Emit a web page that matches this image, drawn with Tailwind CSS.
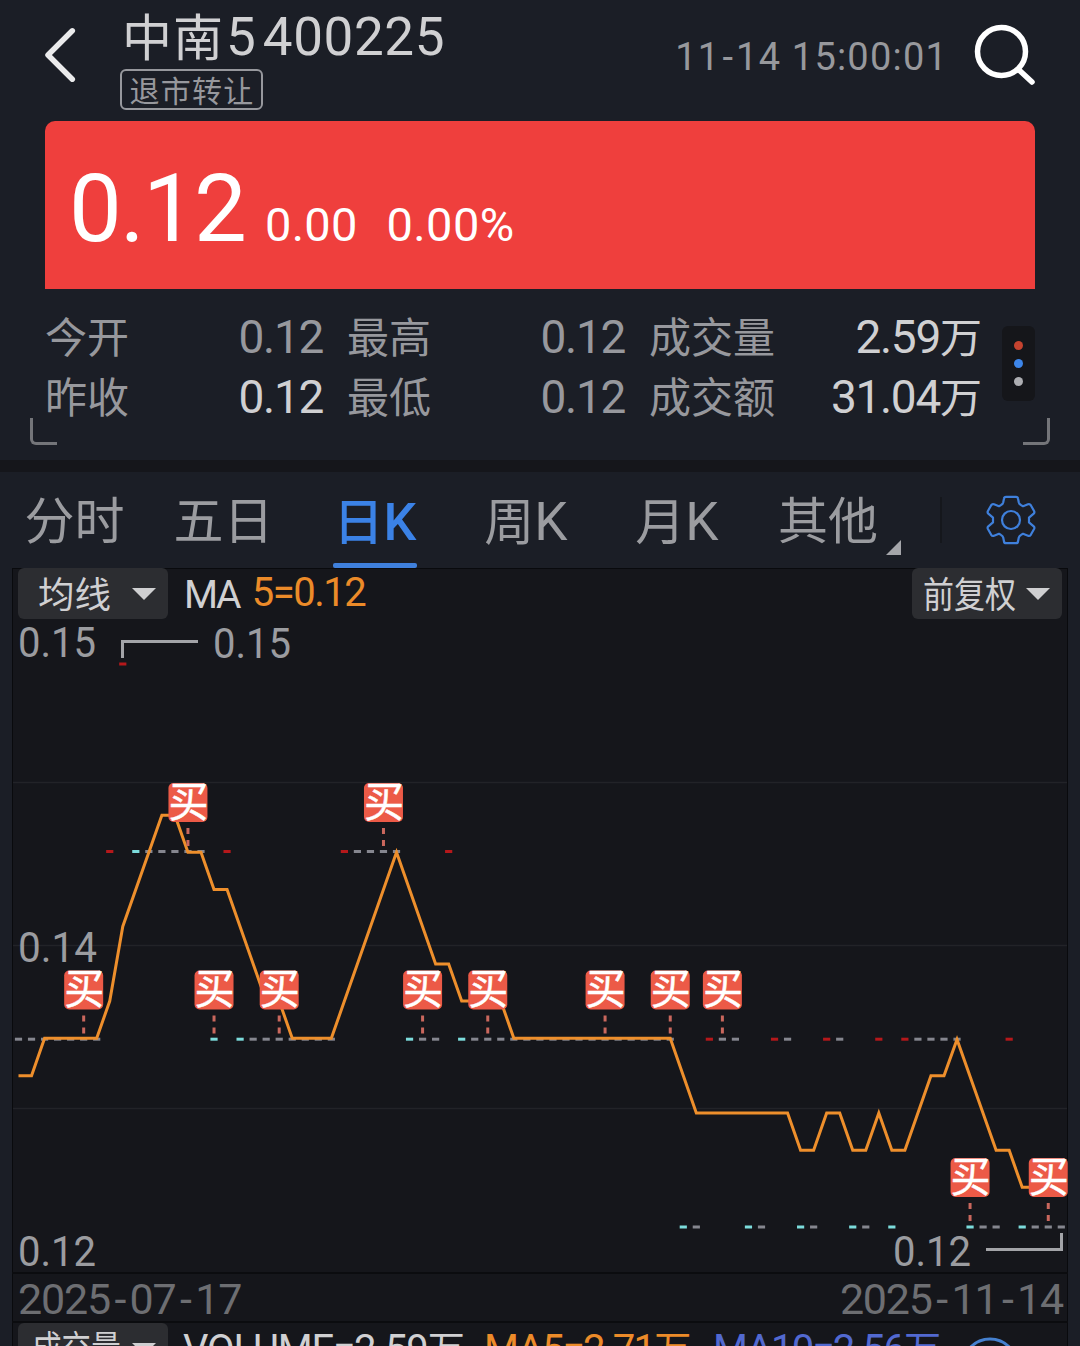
<!DOCTYPE html>
<html lang="zh-CN">

<head>
    <meta charset="UTF-8">
    <meta name="viewport" content="width=device-width, initial-scale=1.0">
    <title>中南5 400225</title>
    <script src="https://cdn.jsdelivr.net/npm/@tailwindcss/browser@4"></script>
</head>

<body class="bg-[#1b1e26] font-['Roboto','Noto_Sans_CJK_SC',sans-serif] text-[#d0d0d2]">
    <div class="w-[1080px] h-[1346px] overflow-hidden flex flex-col">

        <!-- Header -->
        <header class="h-[121px] shrink-0 flex pl-[42px] pr-[42px]">
            <svg class="w-9 h-[60px] mt-[25px]" viewBox="42 25 36 60" fill="none" stroke="#ebebec" stroke-width="5.5" stroke-linecap="round" stroke-linejoin="round">
                <path d="M72.3 30.8L48 55L72.3 79.2" />
            </svg>
            <div class="ml-[42px] flex flex-col items-start">
                <h1 class="mt-[6px] h-[63px] flex items-center text-[53px] leading-none whitespace-nowrap">
                    <span class="text-[50px] tracking-[1px] ml-[2px] pt-[2px]">中南</span><span class="ml-[2px]">5</span><span class="ml-[7px] tracking-[0.6px]">400225</span>
                </h1>
                <span class="w-[143px] h-[41px] flex items-center justify-center border-2 border-[#97989d] rounded-[6px] text-[30px] leading-none tracking-[1.3px] pl-[1px] pt-[4px] text-[#97989d]">退市转让</span>
            </div>
            <span class="ml-auto mt-[37px] text-[38px] leading-[40px] tracking-[1.2px] text-[#97989c] whitespace-nowrap">11<span class="mx-[2px]">-</span>14 15:00:01</span>
            <svg class="w-[66px] h-[66px] mt-[22px] ml-[24px]" viewBox="972 22 66 66" fill="none" stroke="#ffffff" stroke-width="5.5" stroke-linecap="round">
                <circle cx="1001.5" cy="51.5" r="24" />
                <path d="M1018.5 69.5L1032 82" />
            </svg>
        </header>

        <!-- Price -->
        <section class="mx-[45px] h-[168px] shrink-0 rounded-t-[10px] bg-[#ef3f3d] text-white flex items-baseline pl-[24px] pt-[33px]">
            <span class="text-[94px] leading-[110px] tracking-[-1.8px]">0.12</span>
            <span class="ml-[20px] text-[47px] tracking-[0.2px]">0.00</span>
            <span class="ml-[29px] text-[47px] tracking-[0.4px]">0.00%</span>
        </section>

        <!-- Quote details -->
        <section class="relative h-[171px] shrink-0 flex pl-[45px] pr-[45px] pt-[18px]">
            <div class="grid grid-cols-[278px_278px_333px] gap-x-6 auto-rows-[60px] content-start text-[42px] leading-[60px] text-[#97989d]">
                <div class="flex justify-between"><span class="pt-[2px]">今开</span><span class="text-[46px] tracking-[-1.3px]">0.12</span></div>
                <div class="flex justify-between"><span class="pt-[2px]">最高</span><span class="text-[46px] tracking-[-1.3px]">0.12</span></div>
                <div class="flex justify-between"><span class="pt-[2px]">成交量</span><span class="text-[#d0d0d2]"><span class="text-[46px] tracking-[-1.3px]">2.59</span>万</span></div>
                <div class="flex justify-between"><span class="pt-[2px]">昨收</span><span class="text-[46px] tracking-[-1.3px] text-[#d0d0d2]">0.12</span></div>
                <div class="flex justify-between"><span class="pt-[2px]">最低</span><span class="text-[46px] tracking-[-1.3px]">0.12</span></div>
                <div class="flex justify-between"><span class="pt-[2px]">成交额</span><span class="text-[#d0d0d2]"><span class="text-[46px] tracking-[-1.3px]">31.04</span>万</span></div>
            </div>
            <div class="ml-auto mt-[19px] w-[33px] h-[75px] rounded-[6px] bg-[#15161a] flex flex-col items-center justify-center gap-[9px]">
                <i class="size-[9px] rounded-full bg-[#c5432f]"></i>
                <i class="size-[9px] rounded-full bg-[#3d86ea]"></i>
                <i class="size-[9px] rounded-full bg-[#adaeb2]"></i>
            </div>
            <i class="absolute left-[30px] bottom-[15px] size-[27px] border-l-3 border-b-3 border-[#747579] rounded-bl-[6px]"></i>
            <i class="absolute right-[30px] bottom-[15px] size-[27px] border-r-3 border-b-3 border-[#747579] rounded-br-[6px]"></i>
        </section>

        <div class="h-3 shrink-0 bg-[#15161b]"></div>

        <!-- Period tabs -->
        <nav class="h-24 shrink-0 flex text-[50px] leading-[101px] text-[#9b9ca0]">
            <span class="w-[149px] text-center">分时</span>
            <span class="w-[149px] text-center">五日</span>
            <span class="relative w-[156px] text-center text-[#3b82e6] pr-[2px]"><span class="font-medium">日</span><span class="text-[52px] font-medium">K</span>
                <i class="absolute left-[35px] bottom-0 w-[84px] h-[5px] rounded-[2px] bg-[#3f80dc]"></i>
            </span>
            <span class="w-[144px] text-center">周<span class="text-[53px]">K</span></span>
            <span class="w-[158px] text-center">月<span class="text-[53px]">K</span></span>
            <span class="relative w-[144px] text-center">其他
                <svg class="absolute left-[130px] top-[68px] w-[15px] h-[15px]" viewBox="0 0 15 15"><path d="M15 0V15H0Z" fill="#a5a6aa" /></svg>
            </span>
            <i class="w-[2px] h-[46px] mt-[25px] ml-[40px] bg-[#15171c]"></i>
            <svg class="w-[54px] h-[54px] mt-[21px] ml-[42px]" viewBox="-27 -27 54 54" fill="none" stroke="#3f80dc" stroke-width="2.2" stroke-linejoin="round">
                <path d="M-5 -23.2H5Q6.8 -23.2 7 -21.5L7.8 -17.5Q8.2 -15.8 10 -14.9L12 -13.8L17 -15.7Q18.8 -16.3 19.8 -14.8L23.2 -8.8Q23.8 -7.4 22.7 -6.4L18 -2.4V2.4L22.7 6.4Q23.8 7.4 23.2 8.8L19.8 14.8Q18.8 16.3 17 15.7L12 13.8L10 14.9Q8.2 15.8 7.8 17.5L7 21.5Q6.8 23.2 5 23.2H-5Q-6.8 23.2 -7 21.5L-7.8 17.5Q-8.2 15.8 -10 14.9L-12 13.8L-17 15.7Q-18.8 16.3 -19.8 14.8L-23.2 8.8Q-23.8 7.4 -22.7 6.4L-18 2.4V-2.4L-22.7 -6.4Q-23.8 -7.4 -23.2 -8.8L-19.8 -14.8Q-18.8 -16.3 -17 -15.7L-12 -13.8L-10 -14.9Q-8.2 -15.8 -7.8 -17.5L-7 -21.5Q-6.8 -23.2 -5 -23.2Z" />
                <circle r="9" />
            </svg>
        </nav>

        <!-- Chart panel -->
        <main class="mx-3 flex-1 flex flex-col bg-[#15161b] shadow-[inset_1px_1px_0_#090a0d,inset_-1px_0_0_#090a0d]">
            <div class="h-[51px] shrink-0 flex px-[6px] text-[39px] leading-[51px]">
                <div class="w-[150px] flex items-center rounded-[6px] bg-[#2c2d31] pl-[20px] pr-3 text-[36.5px]">
                    <span class="pt-[3px]">均线</span>
                    <svg class="ml-auto w-6 h-3" viewBox="0 0 24 12"><path d="M0 0H24L12 12Z" fill="#cfcfd1" /></svg>
                </div>
                <span class="ml-4 pt-[2px] tracking-[-2.5px]">MA</span>
                <span class="ml-[13px] text-[40px] leading-[50px] tracking-[-1.5px] text-[#ec8b29]">5=0.12</span>
                <div class="ml-auto w-[150px] flex items-center rounded-[6px] bg-[#2c2d31] pl-[11px] pr-3 text-[36.5px]">
                    <span class="w-[92px] pt-[3px] whitespace-nowrap origin-left scale-x-[0.85]">前复权</span>
                    <svg class="ml-auto w-6 h-3" viewBox="0 0 24 12"><path d="M0 0H24L12 12Z" fill="#cfcfd1" /></svg>
                </div>
            </div>

            <svg id="kline" class="w-[1056px] h-[653px] shrink-0 overflow-visible" viewBox="12 619 1056 653" fill="none">
                <path d="M13 782.5H1067M13 945.5H1067M13 1108.5H1067" stroke="#222328" stroke-width="1.5" />
                <g font-size="43" fill="#9b9ca0">
                    <text x="18" y="657" textLength="78" lengthAdjust="spacingAndGlyphs">0.15</text>
                    <text x="18" y="962" textLength="79" lengthAdjust="spacingAndGlyphs">0.14</text>
                    <text x="18" y="1266" textLength="78" lengthAdjust="spacingAndGlyphs">0.12</text>
                    <text x="213" y="658" textLength="78" lengthAdjust="spacingAndGlyphs">0.15</text>
                    <text x="893" y="1266" textLength="78" lengthAdjust="spacingAndGlyphs">0.12</text>
                </g>
                <path d="M122.5 658V641.5H198M986 1249.5H1061.5V1233" stroke="#a3a4a8" stroke-width="3" />
                <g id="ticks" stroke-width="3"></g>
                <polyline id="ma5" stroke="#ee8f2c" stroke-width="3" />
                <g id="marks"></g>
            </svg>

            <div class="h-[51px] shrink-0 border-y-2 border-[#0b0c0f] flex justify-between pl-[6px] pr-[5px] text-[43px] leading-[51px] tracking-[-1.2px] text-[#6d6e72]">
                <span>2025<span class="mx-[4.5px]">-</span>07<span class="mx-[4.5px]">-</span>17</span>
                <span>2025<span class="mx-[4.5px]">-</span>11<span class="mx-[4.5px]">-</span>14</span>
            </div>

            <div class="h-[23px] overflow-hidden flex px-[6px] text-[40px] leading-[54px] whitespace-nowrap">
                <div class="w-[150px] h-[51px] shrink-0 flex items-center rounded-[6px] bg-[#2c2d31] pl-[14px] pr-3 text-[36.5px]">
                    <span class="w-[88px] pt-[3px] origin-left scale-x-[0.81]">成交量</span>
                    <svg class="ml-auto w-6 h-3" viewBox="0 0 24 12"><path d="M0 0H24L12 12Z" fill="#cfcfd1" /></svg>
                </div>
                <span class="ml-[15px] w-[301px] tracking-[-1.1px]">VOLUME=2.59<span class="text-[37px]">万</span></span>
                <span class="w-[229px] tracking-[-1.7px] text-[#ec8b29]">MA5=2.71<span class="text-[37px]">万</span></span>
                <span class="w-[250px] tracking-[-1.7px] text-[#5269d0]">MA10=2.56<span class="text-[37px]">万</span></span>
                <svg class="w-[60px] h-[60px] mt-[13px] shrink-0" viewBox="0 0 60 60" fill="none" stroke="#4580cf" stroke-width="3"><circle cx="27" cy="30" r="27" /></svg>
            </div>
        </main>
    </div>

    <script>
        const NS = 'http://www.w3.org/2000/svg';
        const x = i => 18.5 + 13.035 * i;

        function add(parent, tag, attrs, text) {
            const el = document.createElementNS(NS, tag);
            for (const k in attrs) el.setAttribute(k, attrs[k]);
            if (text) el.textContent = text;
            document.getElementById(parent).appendChild(el);
        }

        // [y, up days, down days, flat ranges]
        const rows = [
            [664, [8], [], []],
            [851.5, [7, 16, 25, 33], [9], [[10, 14], [26, 29]]],
            [1039.2, [53, 58, 62, 66, 68, 76], [15, 17, 30, 34], [[0, 6], [18, 24], [31, 32], [35, 50], [54, 55], [59, 59], [63, 63], [69, 72]]],
            [1227, [], [51, 56, 60, 64, 67, 73, 77], [[52, 52], [57, 57], [61, 61], [65, 65], [74, 75], [78, 80]]]
        ];
        const tick = (i, y, color) => add('ticks', 'path', { d: `M${x(i) - 3.6} ${y}h7.2`, stroke: color });
        rows.forEach(([y, up, down, flat]) => {
            up.forEach(i => tick(i, y, '#b5181b'));
            down.forEach(i => tick(i, y, '#7cdcdc'));
            flat.forEach(([a, b]) => { for (let i = a; i <= b; i++) tick(i, y, '#85868f'); });
        });

        // MA5 turning points: [day, y]
        const ma = [[0, 1075.7], [1, 1075.7], [2, 1038.3], [6, 1038.3], [7, 1001], [8, 926.5], [11, 815.3], [12, 815.3], [13, 852.3], [14, 852.3], [15, 889.5], [16, 889.5], [19, 1001], [20, 1001], [21, 1038.3], [24, 1038.3], [29, 852.3], [32, 964], [33, 964], [34, 1001], [37, 1001], [38, 1038.3], [50, 1038.3], [52, 1113], [59, 1113], [60, 1150.2], [61, 1150.2], [62, 1113], [63, 1113], [64, 1150.2], [65, 1150.2], [66, 1113], [67, 1150.2], [68, 1150.2], [70, 1075.7], [71, 1075.7], [72, 1039.5], [75, 1150.2], [76, 1150.2], [77, 1187.3], [79, 1187.3]];
        document.getElementById('ma5').setAttribute('points', ma.map(([i, y]) => `${x(i)},${y}`).join(' '));

        // Buy marks: [day, top]
        const buys = [[13, 783], [28, 783], [5, 970.5], [15, 970.5], [20, 970.5], [31, 970.5], [36, 970.5], [45, 970.5], [50, 970.5], [54, 970.5], [73, 1158], [79, 1158]];
        buys.forEach(([i, top]) => {
            add('marks', 'path', { d: `M${x(i)} ${top + 45}v18.5`, stroke: '#c9675d', 'stroke-width': 3, 'stroke-dasharray': '6 6' });
            add('marks', 'rect', { x: x(i) - 19.5, y: top, width: 39, height: 39, rx: 5, fill: '#ec5a47' });
            add('marks', 'text', { x: x(i) - 19.5, y: top + 33.5, 'font-size': 42, 'font-weight': 400, textLength: 40, lengthAdjust: 'spacingAndGlyphs', fill: '#fff', stroke: '#fff', 'stroke-width': 0.5 }, '买');
        });
    </script>
</body>

</html>
